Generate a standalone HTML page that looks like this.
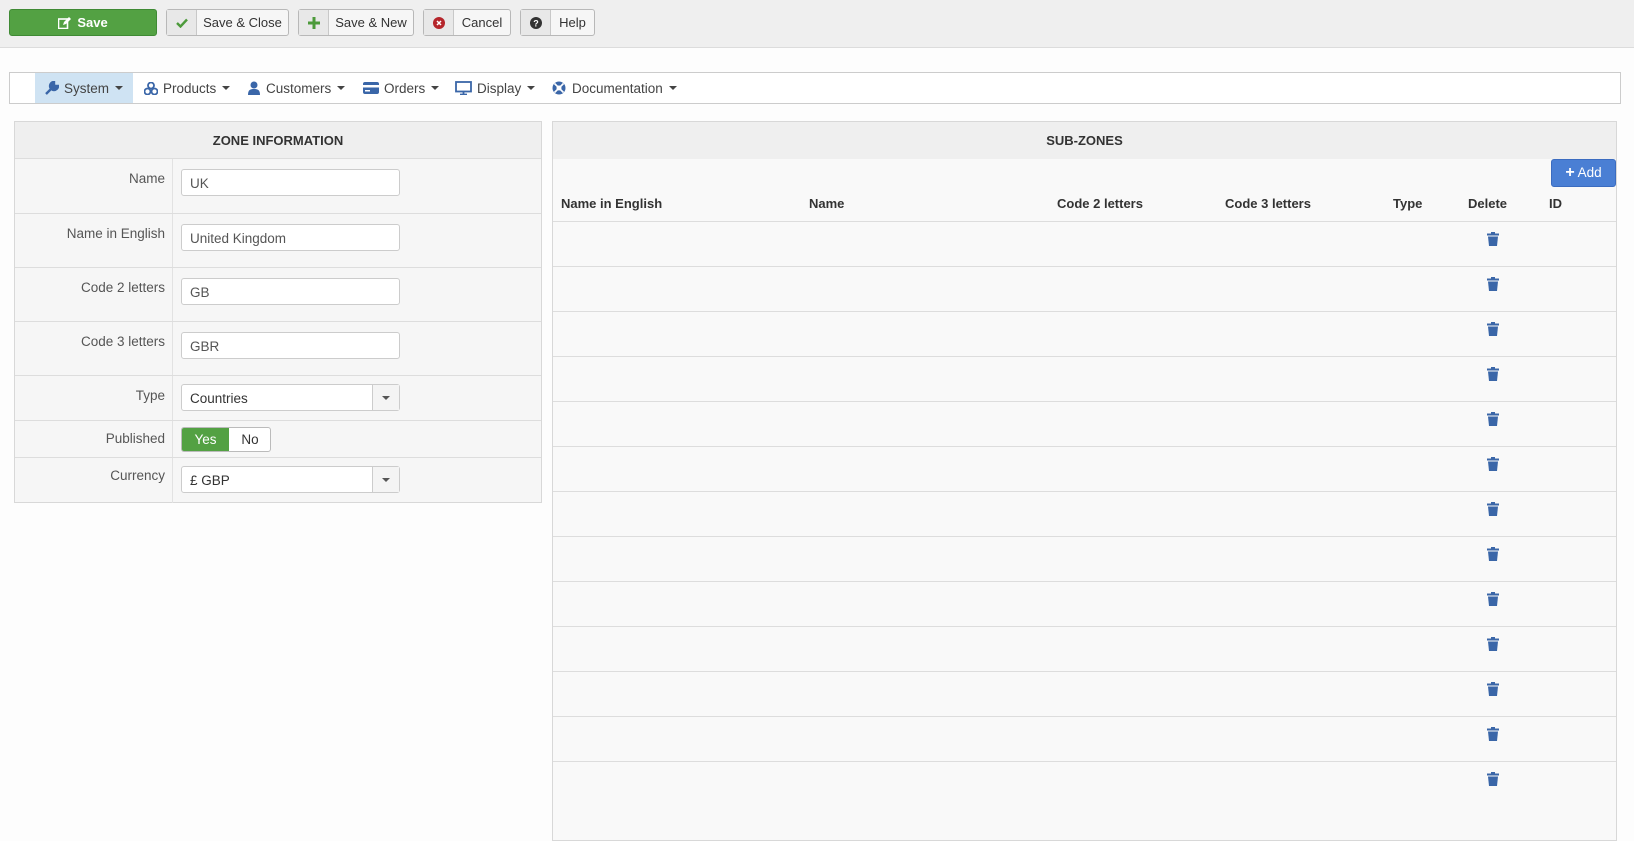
<!DOCTYPE html>
<html><head><meta charset="utf-8"><style>
*{box-sizing:border-box;margin:0;padding:0}
body{width:1634px;height:806px;overflow:hidden;background:#fdfdfd;font-family:"Liberation Sans",Arial,sans-serif;font-size:13.5px;color:#333;position:relative}
.a{position:absolute}
.tb{left:0;top:0;width:1634px;height:48px;background:#efefef;border-bottom:1px solid #dcdcdc}
.btn{position:absolute;top:9px;height:27px;border:1px solid #b8b8b8;border-radius:3px;background:#f6f6f6;display:flex;align-items:center;font-size:13px;color:#333}
.btn .ic{width:30px;height:100%;border-right:1px solid #c8c8c8;background:#e8e8e8;display:flex;align-items:center;justify-content:center}
.btn .tx{flex:1;text-align:center}
.nav{left:9px;top:72px;width:1612px;height:32px;border:1px solid #ccc;background:#fff}
.ni{position:absolute;top:0;height:30px;display:flex;align-items:center;color:#444;font-size:13.5px}
.car{display:inline-block;margin-left:6px;border-left:4px solid transparent;border-right:4px solid transparent;border-top:4px solid #444}
.panel{border:1px solid #d8d8d8;background:#f6f6f6}
.ph{background:#efefef;font-weight:bold;text-align:center;font-size:13px}
.row{position:absolute;left:0;width:526px;border-top:1px solid #ddd}
.lab{position:absolute;right:376px;width:150px;text-align:right;color:#555}
.lcol{position:absolute;left:0;top:0;bottom:0;width:158px;border-right:1px solid #e2e2e2}
.inp{position:absolute;left:166px;width:219px;height:27px;border:1px solid #ccc;border-radius:3px;background:#fff;padding:6px 0 0 8px;color:#555}
.sel .dd{position:absolute;right:0;top:0;width:27px;height:25px;border-left:1px solid #ccc;background:#f4f4f4}
.sel .dd:after{content:"";position:absolute;left:9px;top:11px;border-left:4px solid transparent;border-right:4px solid transparent;border-top:4px solid #555}
.th{position:absolute;top:196px;font-weight:bold;font-size:13px;color:#333}
.rl{position:absolute;left:553px;width:1063px;height:1px;background:#ddd}
.tr{position:absolute;left:1487px;width:12px;height:14px}
</style></head><body>
<div class="a tb"></div>
<div class="btn" style="left:9px;width:148px;background:#53a143;border-color:#3f8a34;color:#fff;font-weight:bold;justify-content:center">
<svg width="13" height="12" viewBox="0 0 13 12" style="margin-right:6px"><rect x="0.5" y="2" width="9" height="9.5" fill="none" stroke="#fff" stroke-width="1.6"/><path d="M5 8l1-3 5-5 2 2-5 5z" fill="#fff"/></svg>Save</div>
<div class="btn" style="left:166px;width:123px"><span class="ic"><svg width="12" height="10"><path d="M1 5l3.5 3.5L11 1.5" fill="none" stroke="#4c9a3a" stroke-width="2.4"/></svg></span><span class="tx">Save &amp; Close</span></div>
<div class="btn" style="left:298px;width:116px"><span class="ic"><svg width="12" height="12"><path d="M6 0v12M0 6h12" stroke="#4c9a3a" stroke-width="3"/></svg></span><span class="tx">Save &amp; New</span></div>
<div class="btn" style="left:423px;width:88px"><span class="ic"><svg width="12" height="12"><circle cx="6" cy="6" r="6" fill="#b5252b"/><path d="M4 4l4 4M8 4l-4 4" stroke="#fff" stroke-width="1.5"/></svg></span><span class="tx">Cancel</span></div>
<div class="btn" style="left:520px;width:75px"><span class="ic"><svg width="12" height="12"><circle cx="6" cy="6" r="6" fill="#333"/><text x="6" y="9.5" font-size="9" font-weight="bold" fill="#fff" text-anchor="middle" font-family="Liberation Sans">?</text></svg></span><span class="tx">Help</span></div>

<div class="a nav">
<div class="a" style="left:25px;top:0;width:98px;height:30px;background:#cfe3f3"></div>
<div class="ni" style="left:35px"><svg width="14" height="14" style="margin-right:5px"><path d="M1 13l6-6M9 1a4 4 0 1 0 4 4l-3 0-1-1z" stroke="#3a66a8" stroke-width="2.4" fill="#3a66a8"/></svg>System<span class="car"></span></div>
<div class="ni" style="left:134px"><svg width="14" height="13" style="margin-right:5px"><circle cx="7" cy="3.5" r="3" fill="none" stroke="#3a66a8" stroke-width="1.8"/><circle cx="3.5" cy="9.5" r="3" fill="none" stroke="#3a66a8" stroke-width="1.8"/><circle cx="10.5" cy="9.5" r="3" fill="none" stroke="#3a66a8" stroke-width="1.8"/></svg>Products<span class="car"></span></div>
<div class="ni" style="left:238px"><svg width="12" height="14" style="margin-right:6px"><circle cx="6" cy="4" r="3.5" fill="#3a66a8"/><path d="M0 14c0-5 2-6 6-6s6 1 6 6z" fill="#3a66a8"/></svg>Customers<span class="car"></span></div>
<div class="ni" style="left:353px"><svg width="16" height="12" style="margin-right:5px"><rect width="16" height="12" rx="2" fill="#3a66a8"/><rect y="3" width="16" height="2.5" fill="#fff"/><rect x="2" y="8" width="5" height="1.5" fill="#fff"/></svg>Orders<span class="car"></span></div>
<div class="ni" style="left:445px"><svg width="17" height="14" style="margin-right:5px"><rect x="1" y="1" width="15" height="9.5" fill="none" stroke="#3a66a8" stroke-width="1.8"/><path d="M5 13.5h7M8.5 10.5v3" stroke="#3a66a8" stroke-width="1.8"/></svg>Display<span class="car"></span></div>
<div class="ni" style="left:542px"><svg width="14" height="14" style="margin-right:6px"><circle cx="7" cy="7" r="6.5" fill="#3a66a8"/><circle cx="7" cy="7" r="2.5" fill="#fff"/><path d="M2.5 2.5l3 3M11.5 2.5l-3 3M2.5 11.5l3-3M11.5 11.5l-3-3" stroke="#fff" stroke-width="1.6"/></svg>Documentation<span class="car"></span></div>
</div>

<div class="a panel" style="left:14px;top:121px;width:528px;height:382px">
<div class="ph" style="height:37px;line-height:37px;border-bottom:1px solid #ddd">ZONE INFORMATION</div>
<div class="row" style="top:36px;height:55px"><div class="lcol"></div><div class="lab" style="top:12px">Name</div><div class="inp" style="top:10px">UK</div></div>
<div class="row" style="top:91px;height:54px"><div class="lcol"></div><div class="lab" style="top:12px">Name in English</div><div class="inp" style="top:10px">United Kingdom</div></div>
<div class="row" style="top:145px;height:54px"><div class="lcol"></div><div class="lab" style="top:12px">Code 2 letters</div><div class="inp" style="top:10px">GB</div></div>
<div class="row" style="top:199px;height:54px"><div class="lcol"></div><div class="lab" style="top:12px">Code 3 letters</div><div class="inp" style="top:10px">GBR</div></div>
<div class="row" style="top:253px;height:45px"><div class="lcol"></div><div class="lab" style="top:12px">Type</div><div class="inp sel" style="top:8px;color:#333">Countries<span class="dd"></span></div></div>
<div class="row" style="top:298px;height:37px"><div class="lcol"></div><div class="lab" style="top:10px">Published</div>
<div class="a" style="left:166px;top:6px;width:90px;height:25px;border:1px solid #bbb;border-radius:3px;background:#fff;overflow:hidden"><div class="a" style="left:0;top:0;width:47px;height:25px;background:#53a143;color:#fff;text-align:center;line-height:23px">Yes</div><div class="a" style="left:47px;top:0;width:42px;text-align:center;line-height:23px">No</div></div></div>
<div class="row" style="top:335px;height:46px"><div class="lcol"></div><div class="lab" style="top:10px">Currency</div><div class="inp sel" style="top:8px;color:#333">£ GBP<span class="dd"></span></div></div>
</div>

<div class="a panel" style="left:552px;top:121px;width:1065px;height:720px;background:#f9f9f9">
<div class="ph" style="height:37px;line-height:37px">SUB-ZONES</div>
</div>
<div class="a" style="left:1551px;top:159px;width:65px;height:28px;background:#4a7fd4;border:1px solid #3b6cc0;border-radius:3px;color:#fff;font-size:13.5px;line-height:26px;text-align:center"><b style="font-size:16px">+</b> Add</div>
<div class="th" style="left:561px">Name in English</div>
<div class="th" style="left:809px">Name</div>
<div class="th" style="left:1057px">Code 2 letters</div>
<div class="th" style="left:1225px">Code 3 letters</div>
<div class="th" style="left:1393px">Type</div>
<div class="th" style="left:1468px">Delete</div>
<div class="th" style="left:1549px">ID</div>
<div id="rows"></div>
<script>
var h='';for(var i=0;i<13;i++){var y=221+i*45;h+='<div class="rl" style="top:'+y+'px"></div><svg class="tr" style="top:'+(y+11)+'px" viewBox="0 0 12 14"><rect x="0" y="1.5" width="12" height="2" fill="#3a66a8"/><rect x="4" y="0" width="4" height="2" fill="#3a66a8"/><path d="M1 4.5h10l-1 9.5H2z" fill="#3a66a8"/></svg>';}
document.getElementById('rows').innerHTML=h;
</script>
</body></html>
